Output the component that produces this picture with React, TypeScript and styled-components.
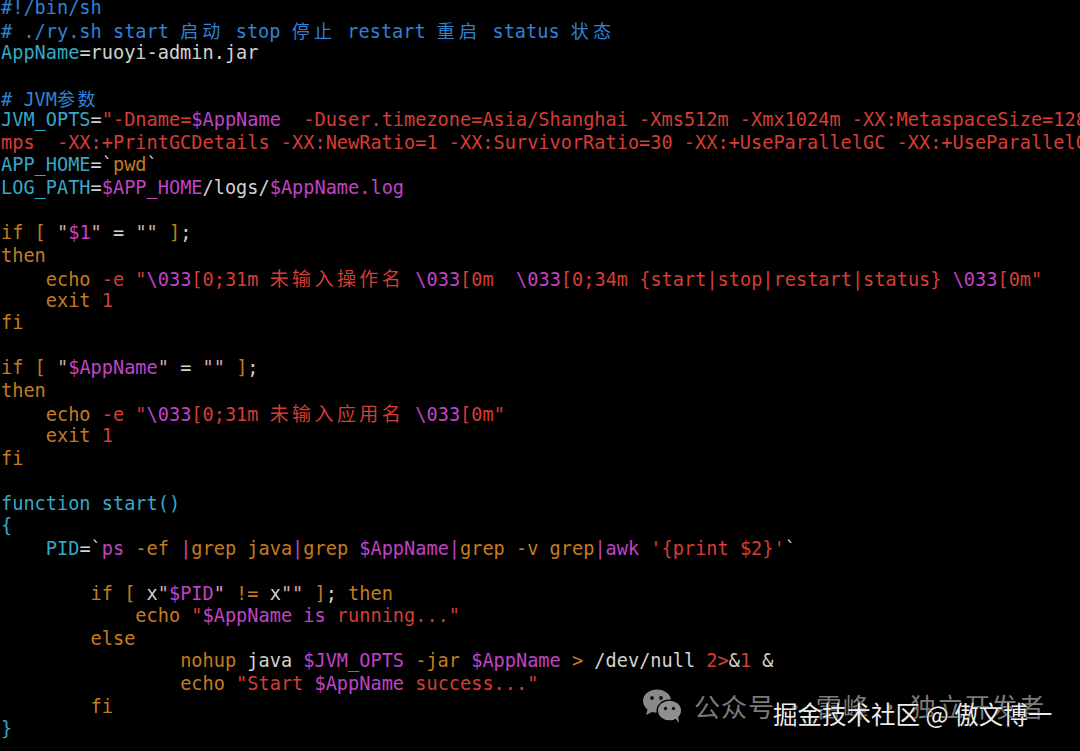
import React from "react";
import styled, { createGlobalStyle } from "styled-components";

const GlobalStyle = createGlobalStyle`
  html, body { margin: 0; padding: 0; background: #000; }
  #root { width: 1080px; height: 751px; }
`;

const C: Record<string, string> = {
  cm: "#2f82d4",
  vr: "#36a8c7",
  tx: "#d2d2d2",
  st: "#d53d35",
  mg: "#c043c6",
  kw: "#c47c1f",
  qt: "#d9a9a6",
};

const Screen = styled.div`
  position: relative;
  width: 1080px;
  height: 751px;
  background: #000;
  overflow: hidden;
`;

const Code = styled.div`
  margin-top: -3.4px;
  padding-left: 1px;
  font-family: "DejaVu Sans Mono", "Liberation Mono", monospace;
  font-size: 18.6px;
  line-height: 22.56px;
`;

const Row = styled.div`
  height: 22.56px;
  white-space: pre;
  overflow: visible;
`;

const Tok = styled.span<{ $c: string }>`
  color: ${(p) => C[p.$c]};
`;

const Wide = styled.span<{ $c: string; $cell: number; $fs: number }>`
  color: ${(p) => C[p.$c]};
  font-family: "Noto Sans CJK SC", sans-serif;
  font-size: ${(p) => p.$fs}px;
  line-height: 22.56px;
  letter-spacing: ${(p) => p.$cell - p.$fs}px;
`;

const Mark = styled.div`
  position: absolute;
  left: 642px;
  top: 688px;
  display: flex;
  align-items: center;
  gap: 10px;
`;

const MarkText = styled.span`
  font-family: "Noto Sans CJK SC", sans-serif;
  font-size: 26px;
  line-height: 32px;
  color: #7b7b7b;
  letter-spacing: 1px;
  white-space: pre;
`;

const Credit = styled.div`
  position: absolute;
  left: 773px;
  top: 697px;
  font-family: "Noto Sans CJK SC", sans-serif;
  font-size: 24.5px;
  line-height: 34px;
  color: #ececec;
  white-space: pre;
  text-shadow: 0 0 2px #000, 0 0 1px #000;
`;

type Seg = [string, string] | [string, string, number, number];

const lines: Seg[][] = [
  [["cm", "#!/bin/sh"]],
  [
    ["cm", "# ./ry.sh start "],
    ["cm", "启动", 22.2, 18],
    ["cm", " stop "],
    ["cm", "停止", 22.2, 18],
    ["cm", " restart "],
    ["cm", "重启", 22.2, 18],
    ["cm", " status "],
    ["cm", "状态", 22.2, 18],
  ],
  [["vr", "AppName"], ["tx", "=ruoyi-admin.jar"]],
  [],
  [["cm", "# JVM"], ["cm", "参数", 20.5, 18]],
  [
    ["vr", "JVM_OPTS"],
    ["tx", "="],
    ["st", '"-Dname='],
    ["mg", "$AppName"],
    [
      "st",
      "  -Duser.timezone=Asia/Shanghai -Xms512m -Xmx1024m -XX:MetaspaceSize=128m -XX:MaxMetaspaceSize=512m -XX:+HeapDumpOnOutOfMemoryError -XX:+PrintGCDateSta",
    ],
  ],
  [
    [
      "st",
      'mps  -XX:+PrintGCDetails -XX:NewRatio=1 -XX:SurvivorRatio=30 -XX:+UseParallelGC -XX:+UseParallelOldGC"',
    ],
  ],
  [["vr", "APP_HOME"], ["tx", "=`"], ["kw", "pwd"], ["tx", "`"]],
  [["vr", "LOG_PATH"], ["tx", "="], ["mg", "$APP_HOME"], ["tx", "/logs/"], ["mg", "$AppName.log"]],
  [],
  [["kw", "if ["], ["tx", " "], ["qt", '"'], ["mg", "$1"], ["qt", '"'], ["tx", " = "], ["qt", '""'], ["kw", " ]"], ["tx", ";"]],
  [["kw", "then"]],
  [
    ["tx", "    "],
    ["kw", "echo"],
    ["tx", " "],
    ["st", '-e "'],
    ["mg", "\\033"],
    ["st", "[0;31m "],
    ["st", "未输入操作名", 22.4, 19],
    ["st", " "],
    ["mg", "\\033"],
    ["st", "[0m  "],
    ["mg", "\\033"],
    ["st", "[0;34m {start|stop|restart|status} "],
    ["mg", "\\033"],
    ["st", '[0m"'],
  ],
  [["tx", "    "], ["kw", "exit "], ["st", "1"]],
  [["kw", "fi"]],
  [],
  [["kw", "if ["], ["tx", " "], ["qt", '"'], ["mg", "$AppName"], ["qt", '"'], ["tx", " = "], ["qt", '""'], ["kw", " ]"], ["tx", ";"]],
  [["kw", "then"]],
  [
    ["tx", "    "],
    ["kw", "echo"],
    ["tx", " "],
    ["st", '-e "'],
    ["mg", "\\033"],
    ["st", "[0;31m "],
    ["st", "未输入应用名", 22.4, 19],
    ["st", " "],
    ["mg", "\\033"],
    ["st", '[0m"'],
  ],
  [["tx", "    "], ["kw", "exit "], ["st", "1"]],
  [["kw", "fi"]],
  [],
  [["vr", "function start()"]],
  [["vr", "{"]],
  [
    ["tx", "    "],
    ["vr", "PID"],
    ["tx", "=`"],
    ["mg", "ps"],
    ["kw", " -ef "],
    ["mg", "|"],
    ["kw", "grep java"],
    ["mg", "|"],
    ["kw", "grep "],
    ["mg", "$AppName|"],
    ["kw", "grep -v grep"],
    ["mg", "|awk "],
    ["st", "'{print $2}'"],
    ["tx", "`"],
  ],
  [],
  [
    ["tx", "        "],
    ["kw", "if ["],
    ["tx", " x"],
    ["qt", '"'],
    ["mg", "$PID"],
    ["qt", '"'],
    ["kw", " != "],
    ["tx", "x"],
    ["qt", '""'],
    ["kw", " ]"],
    ["tx", "; "],
    ["kw", "then"],
  ],
  [["tx", "            "], ["kw", "echo "], ["st", '"'], ["mg", "$AppName is"], ["st", ' running..."']],
  [["tx", "        "], ["kw", "else"]],
  [
    ["tx", "                "],
    ["kw", "nohup "],
    ["tx", "java "],
    ["mg", "$JVM_OPTS"],
    ["kw", " -jar "],
    ["mg", "$AppName"],
    ["kw", " > "],
    ["tx", "/dev/null "],
    ["st", "2>"],
    ["tx", "&"],
    ["st", "1"],
    ["tx", " &"],
  ],
  [["tx", "                "], ["kw", "echo "], ["st", '"Start '], ["mg", "$AppName"], ["st", ' success..."']],
  [["tx", "        "], ["kw", "fi"]],
  [["vr", "}"]],
];

const WeChatIcon = () => (
  <svg width="42" height="36" viewBox="0 0 42 36">
    <ellipse cx="15" cy="13" rx="14" ry="11.5" fill="#8a8a8a" />
    <path d="M6 20 L4 27 L12 23 Z" fill="#8a8a8a" />
    <ellipse cx="27.5" cy="22.5" rx="13" ry="11" fill="#000" />
    <ellipse cx="27.5" cy="22.5" rx="11.5" ry="9.8" fill="#8f8f8f" />
    <path d="M33 30 L37 35 L36 28 Z" fill="#8f8f8f" />
    <circle cx="10" cy="10" r="1.9" fill="#111" />
    <circle cx="19" cy="10" r="1.9" fill="#111" />
    <circle cx="23.5" cy="20.5" r="1.7" fill="#111" />
    <circle cx="31.5" cy="20.5" r="1.7" fill="#111" />
  </svg>
);

export default function App() {
  return (
    <>
      <GlobalStyle />
      <Screen>
        <Code>
          {lines.map((segs, i) => (
            <Row key={i}>
              {segs.length === 0
                ? " "
                : segs.map((s, j) =>
                    s.length === 4 ? (
                      <Wide key={j} $c={s[0]} $cell={s[2]} $fs={s[3]}>
                        {s[1]}
                      </Wide>
                    ) : (
                      <Tok key={j} $c={s[0]}>
                        {s[1]}
                      </Tok>
                    )
                  )}
            </Row>
          ))}
        </Code>
        <Mark>
          <WeChatIcon />
          <MarkText>公众号 · 雷峰 · 独立开发者</MarkText>
        </Mark>
        <Credit>掘金技术社区 @ 傲文博一</Credit>
      </Screen>
    </>
  );
}
